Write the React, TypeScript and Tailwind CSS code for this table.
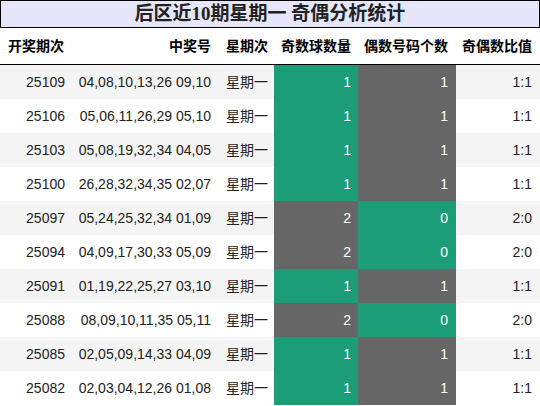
import React from "react";

type Row = { issue: string; nums: string; odd: number; even: number; ratio: string };

const rows: Row[] = [
  { issue: "25109", nums: "04,08,10,13,26 09,10", odd: 1, even: 1, ratio: "1:1" },
  { issue: "25106", nums: "05,06,11,26,29 05,10", odd: 1, even: 1, ratio: "1:1" },
  { issue: "25103", nums: "05,08,19,32,34 04,05", odd: 1, even: 1, ratio: "1:1" },
  { issue: "25100", nums: "26,28,32,34,35 02,07", odd: 1, even: 1, ratio: "1:1" },
  { issue: "25097", nums: "05,24,25,32,34 01,09", odd: 2, even: 0, ratio: "2:0" },
  { issue: "25094", nums: "04,09,17,30,33 05,09", odd: 2, even: 0, ratio: "2:0" },
  { issue: "25091", nums: "01,19,22,25,27 03,10", odd: 1, even: 1, ratio: "1:1" },
  { issue: "25088", nums: "08,09,10,11,35 05,11", odd: 2, even: 0, ratio: "2:0" },
  { issue: "25085", nums: "02,05,09,14,33 04,09", odd: 1, even: 1, ratio: "1:1" },
  { issue: "25082", nums: "02,03,04,12,26 01,08", odd: 1, even: 1, ratio: "1:1" },
];

const cols = "grid grid-cols-[72px_146px_56px_84px_98px_84px]";
const font = { fontFamily: '"Liberation Sans", "Noto Sans CJK SC", sans-serif' };

export default function App() {
  return (
    <div className="w-[540px] bg-white text-[14px]" style={font}>
      <div
        className="flex h-[28px] items-center justify-center border border-black bg-[#e6e6fa] text-[19px] font-bold text-[#222]"
        style={{ fontFamily: '"Liberation Serif", "Noto Sans CJK SC", serif' }}
      >
        后区近10期星期一 奇偶分析统计
      </div>

      <div className={`${cols} h-[37px] items-center border-b border-black font-bold text-black`}>
        <div className="pr-[8px] text-right">开奖期次</div>
        <div className="pr-[7px] text-right">中奖号</div>
        <div className="pr-[6px] text-right">星期次</div>
        <div className="pr-[7px] text-right">奇数球数量</div>
        <div className="pr-[8px] text-right">偶数号码个数</div>
        <div className="pr-[8px] text-right">奇偶数比值</div>
      </div>

      {rows.map((r, i) => {
        const oddGreen = r.odd === 1;
        return (
          <div
            key={r.issue}
            className={`${cols} h-[34px] items-stretch text-[#222] ${i % 2 === 0 ? "bg-[#f4f4f4]" : "bg-white"}`}
          >
            <div className="flex items-center justify-end pr-[7px]">{r.issue}</div>
            <div className="flex items-center justify-end pr-[7px]">{r.nums}</div>
            <div className="flex items-center justify-end pr-[6px]">星期一</div>
            <div
              className={`flex items-center justify-end pr-[7px] text-white ${oddGreen ? "bg-[#1b9e77]" : "bg-[#666666]"}`}
            >
              {r.odd}
            </div>
            <div
              className={`flex items-center justify-end pr-[8px] text-white ${oddGreen ? "bg-[#666666]" : "bg-[#1b9e77]"}`}
            >
              {r.even}
            </div>
            <div className="flex items-center justify-end pr-[8px]">{r.ratio}</div>
          </div>
        );
      })}
    </div>
  );
}
